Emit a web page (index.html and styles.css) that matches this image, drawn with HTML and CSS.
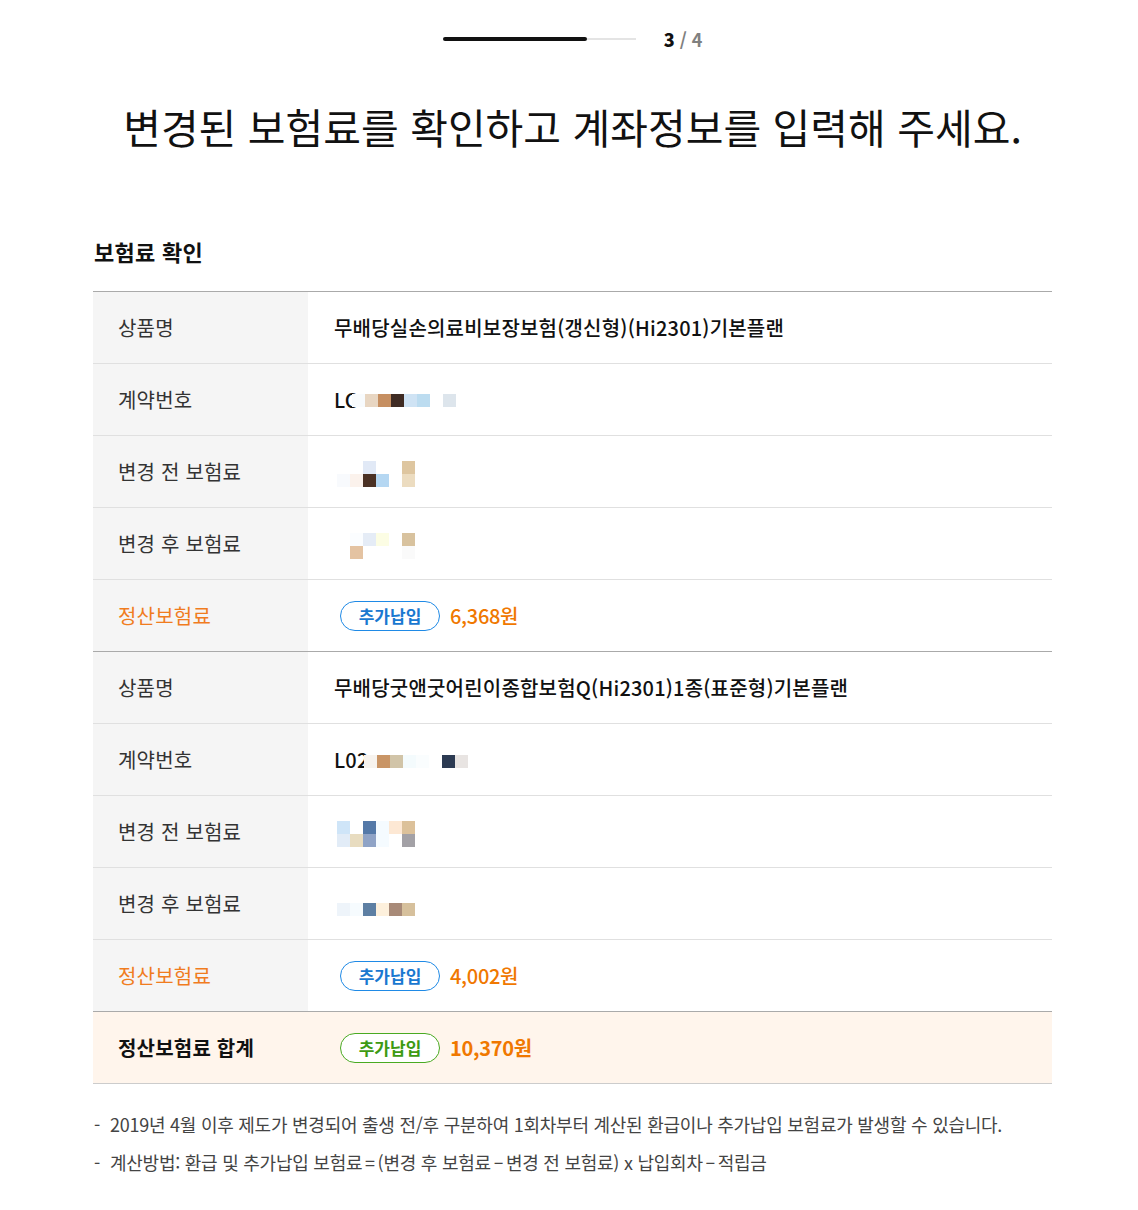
FILE: index.html
```html
<!DOCTYPE html>
<html lang="ko">
<head>
<meta charset="utf-8">
<title>보험료 확인</title>
<link rel="stylesheet" href="styles.css">
</head>
<body>
<div class="page">
  <div class="progress">
    <div class="track"><div class="fill"></div></div>
    <div class="step"><b>3</b> <span>/ 4</span></div>
  </div>

  <h1 class="title">변경된 보험료를 확인하고 계좌정보를 입력해 주세요.</h1>

  <h2 class="section">보험료 확인</h2>

  <div class="table">
    <div class="group">
      <div class="row">
        <div class="th">상품명</div>
        <div class="td">무배당실손의료비보장보험(갱신형)(Hi2301)기본플랜</div>
      </div>
      <div class="row">
        <div class="th">계약번호</div>
        <div class="td"><span class="num">LO</span><span class="mosaic m-contract">
          <i style="background:#f8fbfd"></i><i style="background:#e8d6c2"></i><i style="background:#c68f61"></i><i style="background:#3f2b23"></i><i style="background:#cfe3f4"></i><i style="background:#bcdcf0"></i><i></i><i style="background:#dde5ec"></i>
        </span></div>
      </div>
      <div class="row">
        <div class="th">변경 전 보험료</div>
        <div class="td"><span class="mosaic m-amt">
          <i></i><i></i><i style="background:#e1e9f6"></i><i></i><i></i><i style="background:#dec6a0"></i>
          <i style="background:#f8fafd"></i><i style="background:#fbf2ec"></i><i style="background:#4b3124"></i><i style="background:#b5d7f2"></i><i></i><i style="background:#ecdcc0"></i>
        </span></div>
      </div>
      <div class="row">
        <div class="th">변경 후 보험료</div>
        <div class="td"><span class="mosaic m-amt">
          <i></i><i style="background:#fbfdff"></i><i style="background:#e5ecf6"></i><i style="background:#fcfde4"></i><i></i><i style="background:#d8c29e"></i>
          <i></i><i style="background:#e4c3a2"></i><i></i><i></i><i></i><i style="background:#fafafa"></i>
        </span></div>
      </div>
      <div class="row">
        <div class="th accent">정산보험료</div>
        <div class="td"><span class="badge blue">추가납입</span><span class="amount">6,368원</span></div>
      </div>
    </div>

    <div class="group">
      <div class="row">
        <div class="th">상품명</div>
        <div class="td">무배당굿앤굿어린이종합보험Q(Hi2301)1종(표준형)기본플랜</div>
      </div>
      <div class="row">
        <div class="th">계약번호</div>
        <div class="td"><span class="num">L02</span><span class="mosaic m-contract m-overlap">
          <i style="background:#f7f3ee"></i><i style="background:#c99566"></i><i style="background:#d1c4a8"></i><i style="background:#f4fbfd"></i><i style="background:#fafdfe"></i><i></i><i style="background:#2c3a52"></i><i style="background:#e8e4e2"></i>
        </span></div>
      </div>
      <div class="row">
        <div class="th">변경 전 보험료</div>
        <div class="td"><span class="mosaic m-amt">
          <i style="background:#cfe5f8"></i><i></i><i style="background:#5479a8"></i><i style="background:#f5fbff"></i><i style="background:#fde8d4"></i><i style="background:#dcc19a"></i>
          <i style="background:#e2ecf7"></i><i style="background:#e8dcc0"></i><i style="background:#8fa3c6"></i><i style="background:#f5fbff"></i><i></i><i style="background:#a3a1a6"></i>
        </span></div>
      </div>
      <div class="row">
        <div class="th">변경 후 보험료</div>
        <div class="td"><span class="mosaic m-amt m-single">
          <i style="background:#eef4fa"></i><i style="background:#f6fbfe"></i><i style="background:#5d7fa3"></i><i style="background:#fdf0dc"></i><i style="background:#a88a78"></i><i style="background:#d6c09c"></i>
        </span></div>
      </div>
      <div class="row">
        <div class="th accent">정산보험료</div>
        <div class="td"><span class="badge blue">추가납입</span><span class="amount">4,002원</span></div>
      </div>
    </div>

    <div class="row total">
      <div class="th">정산보험료 합계</div>
      <div class="td"><span class="badge green">추가납입</span><span class="amount strong">10,370원</span></div>
    </div>
  </div>

  <ul class="notes">
    <li>2019년 4월 이후 제도가 변경되어 출생 전/후 구분하여 1회차부터 계산된 환급이나 추가납입 보험료가 발생할 수 있습니다.</li>
    <li>계산방법: 환급 및 추가납입 보험료<span class="op"> = </span>(변경 후 보험료<span class="op"> – </span>변경 전 보험료) x 납입회차<span class="op"> – </span>적립금</li>
  </ul>
</div>
</body>
</html>
```

FILE: styles.css
```css
* { box-sizing: border-box; }

html, body {
  margin: 0;
  padding: 0;
  background: #fff;
}

body {
  font-family: "Noto Sans CJK KR", "Noto Sans", sans-serif;
  color: #111;
}

.page {
  width: 959px;
  margin-left: 93px;
  padding-top: 29px;
  padding-bottom: 40px;
}

/* progress */
.progress {
  display: flex;
  align-items: center;
  justify-content: center;
  gap: 28px;
  height: 20px;
}

.track {
  width: 193px;
  height: 4px;
  background: linear-gradient(#e4e4e4, #e4e4e4) center / 100% 2px no-repeat;
}

.fill {
  width: 144px;
  height: 4px;
  border-radius: 2px;
  background: #111;
}

.step {
  font-size: 18px;
  font-weight: 700;
  line-height: 20px;
  color: #111;
}

.step span {
  color: #808080;
}

/* title */
.title {
  margin: 49px 0 0;
  font-size: 41px;
  font-weight: 400;
  line-height: 56px;
  letter-spacing: 0;
  text-align: center;
  color: #111;
}

.section {
  margin: 81px 0 0 1px;
  font-size: 22px;
  font-weight: 700;
  line-height: 32px;
  letter-spacing: 0.3px;
  color: #111;
}

/* table */
.table {
  margin-top: 24px;
  border-top: 1px solid #aaa;
}

.group {
  border-bottom: 1px solid #aaa;
}

.row {
  display: flex;
  height: 72px;
  border-bottom: 1px solid #e0e0e0;
}

.group .row:last-child {
  height: 71px;
  border-bottom: none;
}

.th {
  width: 215px;
  flex: none;
  display: flex;
  align-items: center;
  padding-left: 25px;
  background: #f5f5f5;
  font-size: 20px;
  letter-spacing: 0.2px;
  color: #333;
}

.th.accent {
  color: #f07c1e;
}

.td {
  flex: 1;
  display: flex;
  align-items: center;
  padding-left: 26px;
  font-size: 20px;
  font-weight: 500;
  letter-spacing: 0.2px;
  color: #111;
}

.num {
  font-weight: 500;
}

/* pixelated masks */
.mosaic {
  display: inline-grid;
  grid-auto-rows: 13px;
}

.mosaic i {
  display: block;
}

.m-contract {
  grid-template-columns: repeat(8, 13px);
  margin-left: -8px;
  margin-top: 2px;
}

.m-overlap {
  margin-left: -5px;
  margin-top: 4px;
}

.m-amt {
  grid-template-columns: repeat(6, 13px);
  margin-left: 3px;
  margin-top: 4px;
}

.m-single {
  margin-top: 11px;
}

/* badge + amount */
.badge {
  display: inline-flex;
  align-items: center;
  justify-content: center;
  width: 100px;
  height: 30px;
  margin-left: 6px;
  border-radius: 15px;
  font-size: 17px;
  font-weight: 700;
  letter-spacing: 0;
  background: #fff;
}

.badge.blue {
  border: 1.5px solid #1f8ae6;
  color: #1a78d0;
}

.badge.green {
  border: 1.5px solid #4aaa22;
  color: #3d9a12;
}

.amount {
  margin-left: 10px;
  font-size: 20px;
  font-weight: 500;
  letter-spacing: -0.3px;
  color: #f07800;
}

.amount.strong {
  font-weight: 700;
}

.total {
  height: 72px;
  border-bottom: 1px solid #ccc;
  background: #fff5ec;
}

.total .th {
  background: transparent;
  font-size: 20px;
  font-weight: 700;
  letter-spacing: 0.2px;
  color: #111;
}

/* notes */
.notes {
  list-style: none;
  margin: 21px 0 0;
  padding: 0;
}

.notes li {
  position: relative;
  padding-left: 17px;
  font-size: 18px;
  line-height: 38px;
  letter-spacing: -0.25px;
  color: #444;
}

.notes li::before {
  content: "-";
  position: absolute;
  left: 1px;
  top: 0;
}

.notes .op {
  word-spacing: -2px;
}
```
